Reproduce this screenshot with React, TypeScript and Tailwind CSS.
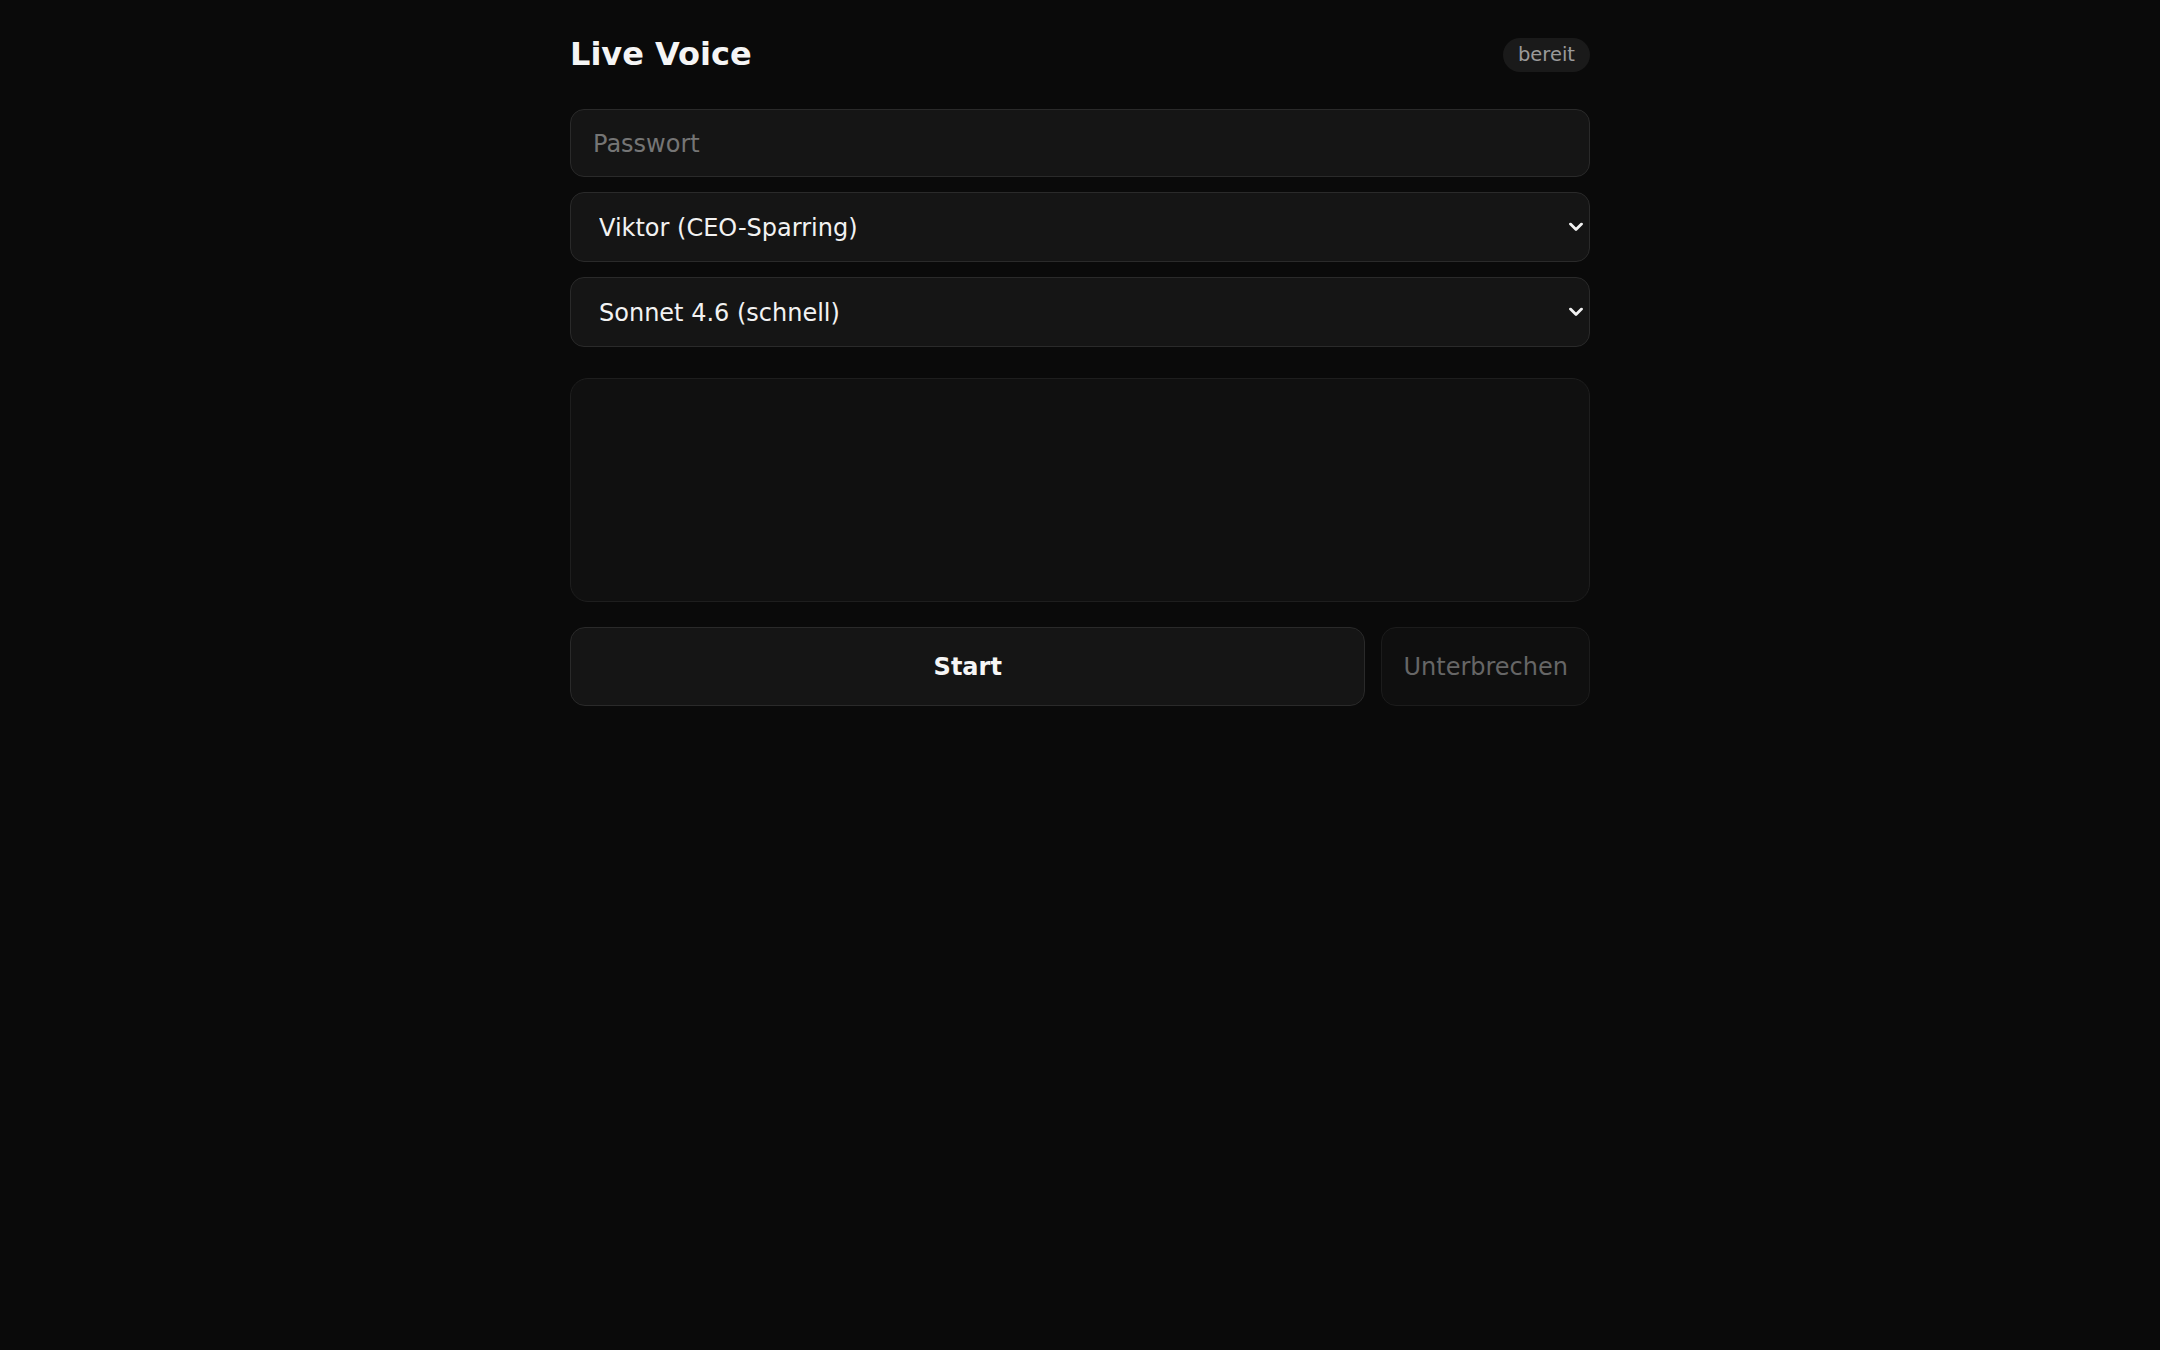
import { useState } from 'react';

const FONT = '"DejaVu Sans", "Liberation Sans", sans-serif';

// Native-looking select with a small bold chevron on the right.
function Picker({ value, options, onChange }: { value: string; options: string[]; onChange: (v: string) => void }) {
  return (
    <div className="relative">
      <select
        value={value}
        onChange={(e) => onChange(e.target.value)}
        className="h-[70px] w-full appearance-none rounded-[14px] border border-[#2a2a2a] bg-[#151515] pt-[2px] pl-[28px] pr-[40px] text-[24px] text-[#f2f2f2] outline-none"
        style={{ fontFamily: FONT }}
      >
        {options.map((o) => (
          <option key={o} value={o}>
            {o}
          </option>
        ))}
      </select>
      <svg
        className="pointer-events-none absolute right-[7px] top-1/2 -translate-y-1/2"
        width="14"
        height="9"
        viewBox="0 0 14 9"
        fill="none"
      >
        <path d="M1.5 1.5 L7 7 L12.5 1.5" stroke="#f2f2f2" strokeWidth="2.8" strokeLinecap="round" strokeLinejoin="round" />
      </svg>
    </div>
  );
}

export default function App() {
  const [persona, setPersona] = useState('Viktor (CEO-Sparring)');
  const [model, setModel] = useState('Sonnet 4.6 (schnell)');

  return (
    <div className="min-h-screen bg-[#0a0a0a] text-[#f2f2f2]" style={{ fontFamily: FONT }}>
      <div className="mx-auto flex w-[1020px] flex-col pt-[36px]">
        <header className="mb-[36px] flex items-center justify-between">
          <h1 className="text-[32px] leading-[37px] font-bold text-[#f5f5f5]">Live Voice</h1>
          <span className="flex h-[34px] items-center rounded-full bg-[#1a1a1a] px-[15px] text-[19.5px] text-[#9a9a9a]">
            bereit
          </span>
        </header>

        <input
          type="password"
          placeholder="Passwort"
          className="h-[68px] w-full rounded-[14px] border border-[#2a2a2a] bg-[#151515] px-[22px] pt-[2px] text-[24px] text-[#f2f2f2] outline-none placeholder:text-[#757575]"
          style={{ fontFamily: FONT }}
        />

        <div className="mt-[15px]">
          <Picker value={persona} onChange={setPersona} options={['Viktor (CEO-Sparring)']} />
        </div>
        <div className="mt-[15px]">
          <Picker value={model} onChange={setModel} options={['Sonnet 4.6 (schnell)']} />
        </div>

        {/* transcript */}
        <div className="mt-[31px] h-[224px] rounded-[18px] border border-[#1e1e1e] bg-[#101010]" />

        <div className="mt-[25px] flex gap-[16px]">
          <button
            className="h-[79px] flex-1 rounded-[15px] border border-[#2a2a2a] bg-[#151515] text-[24px] font-bold text-[#f5f5f5]"
            style={{ fontFamily: FONT }}
          >
            Start
          </button>
          <button
            disabled
            className="h-[79px] rounded-[15px] border border-[#1c1c1c] bg-[#0f0f0f] px-[21px] text-[24px] text-[#666666]"
            style={{ fontFamily: FONT }}
          >
            Unterbrechen
          </button>
        </div>
      </div>
    </div>
  );
}
